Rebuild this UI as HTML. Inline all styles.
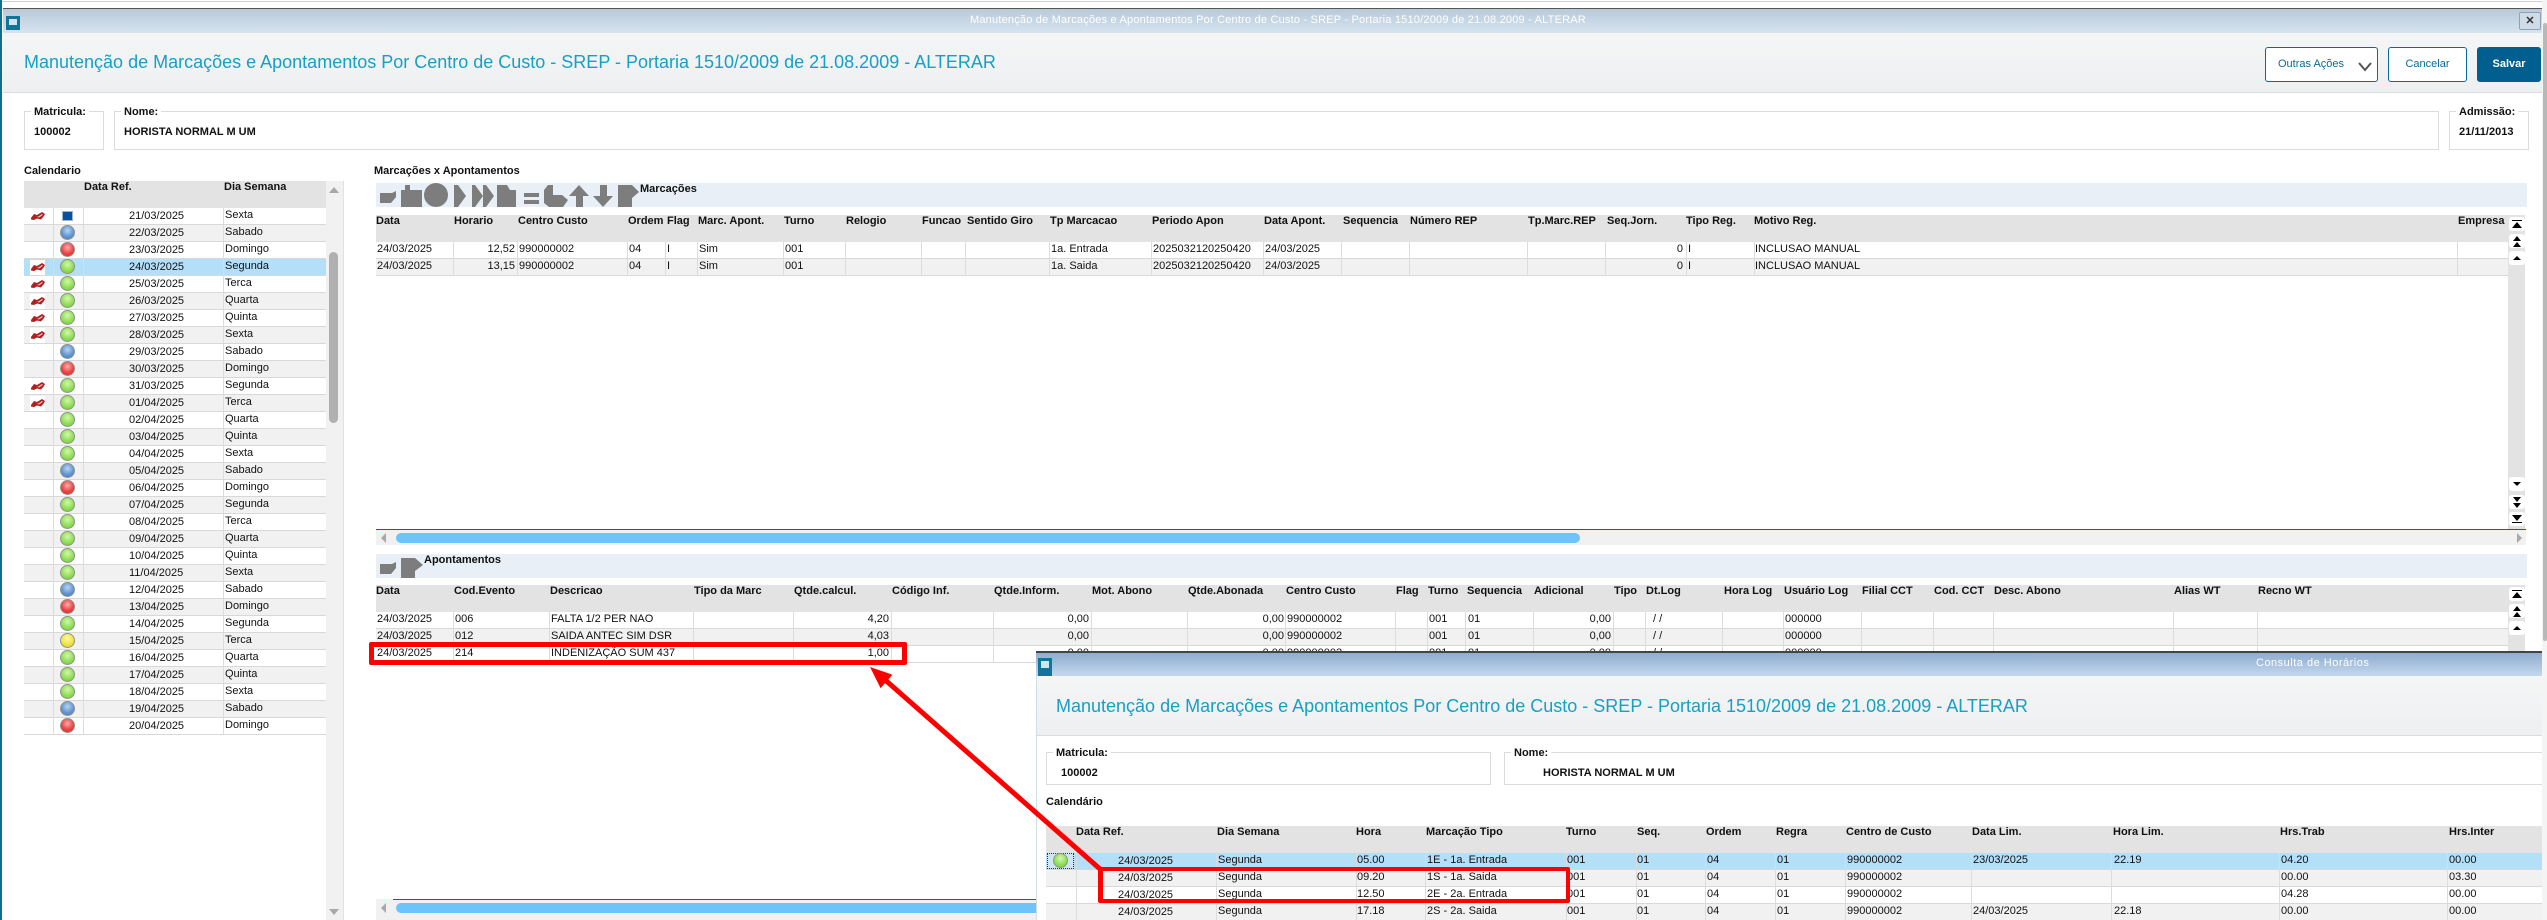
<!DOCTYPE html>
<html lang="pt"><head><meta charset="utf-8"><title>Manutenção de Marcações</title>
<style>
html,body{margin:0;padding:0;background:#fff}
body{position:relative;width:2547px;height:920px;overflow:hidden;font:11px/16px "Liberation Sans",Arial,sans-serif;color:#111}
div,span,svg,i,b{position:absolute;white-space:nowrap}
i{display:block}
.l{left:0;width:0;height:0}
.l span{top:0}
.l b{top:0;font-weight:bold}
.ra{transform:translateX(-100%)}
.bg{height:16px;border-bottom:1px solid #d8d8d8;background:#fff}
.bg.s{background:#f1f1f1}
.bg.sel{background:#b3dff9}
.hd{background:#e3e3e3;height:27px}
.v{width:1px;background:#dcdcdc}
.tb{background:#e8eff6}
.fs{border:1px solid #dcdcdc;box-sizing:border-box;background:#fff}
.lg{background:#fff;font-weight:bold;padding:0 3px;top:-8px}
.val{font-weight:bold}
.ttl{font-size:18px;line-height:22px;color:#17a0c4}
.cal{left:24px;top:208px;width:302px}
.r{left:0;width:302px;height:16px;border-bottom:1px solid #d8d8d8;background:#fff}
.r:nth-child(even){background:#f1f1f1}
.r.sel{background:#b3dff9}
.r u{position:absolute;left:105px;width:0;top:0;text-decoration:none}
.r em{position:absolute;left:201px;top:-1px;font-style:normal}
.g,.bl,.rd,.ye{width:15px;height:15px;border-radius:50%;left:36px;top:0;box-sizing:border-box;border:1px solid #8f948b}
.g{background:radial-gradient(circle at 50% 35%,#d4f7ae,#92e058 55%,#6fc43f)}
.bl{background:radial-gradient(circle at 50% 35%,#b9d4f0,#6498d4 55%,#4078b8)}
.rd{background:radial-gradient(circle at 50% 35%,#f9aeae,#ee4444 55%,#cc2a2a)}
.ye{background:radial-gradient(circle at 50% 35%,#fdf8a8,#f2e444 55%,#d2c432)}
.bk{left:7px;top:4px;width:14px;height:8px}
.w{left:6px;top:1px;width:15px;height:15px;background:#fff}
.sb{width:16px;height:14px;background:#fff;border-radius:3px;left:2509px}
.sb svg{left:0;top:0}
.btn{box-sizing:border-box;border:1px solid #0a6a96;border-radius:3px;top:47px;height:35px;background:#fff;color:#0a6a96;text-align:center;line-height:33px}
</style></head><body>
<svg width="0" height="0" style="left:0;top:0"><defs>
<g id="b"><path d="M0 6 L3 2 L6 3 L11 0 L14 2 L13 4 L10 7.5 L6 6.5 L3 8 L0 7.5 Z" fill="#b02020"/><path d="M5 4 L7 4.6 L11 2 L12 2.8 L8 5.6 Z" fill="#e6bcbc"/></g>
<g id="u1"><path d="M3 11 H13 L8 5 Z M3 4 H13 V3 H3 Z" fill="#000"/></g>
<g id="u2"><path d="M4 7 H12 L8 2 Z M4 13 H12 L8 8 Z" fill="#000"/></g>
<g id="u3"><path d="M4 9 H12 L8 5 Z" fill="#000"/></g>
<g id="d1"><path d="M3 3 H13 L8 9 Z M3 10 H13 V11 H3 Z" fill="#000"/></g>
<g id="d2"><path d="M4 2 H12 L8 7 Z M4 8 H12 L8 13 Z" fill="#000"/></g>
<g id="d3"><path d="M4 5 H12 L8 9 Z" fill="#000"/></g>
</defs></svg>

<!-- chrome -->
<div style="left:0;top:1px;width:2547px;height:1px;background:#cfcfcf"></div>
<div style="left:0;top:0;width:2px;height:920px;background:#0f6f8f"></div>
<div style="left:3px;top:8px;width:2539px;height:1px;background:#555"></div>
<div style="left:3px;top:9px;width:2539px;height:24px;background:linear-gradient(#b9c9d8,#d6e4f1)"></div>
<div style="left:970px;top:12px;color:#fff;letter-spacing:.2px">Manutenção de Marcações e Apontamentos Por Centro de Custo - SREP - Portaria 1510/2009 de 21.08.2009 - ALTERAR</div>
<div style="left:6px;top:16px;width:14px;height:14px;background:#11759a"><div style="left:3px;top:3px;width:8px;height:6px;background:#cfe6f2"></div></div>
<div style="left:2519px;top:12px;width:22px;height:18px;border:1px solid #8ea2b6;box-sizing:border-box;border-radius:2px;background:#cfdbe7;text-align:center;line-height:16px;font-weight:bold;color:#333">✕</div>
<div style="left:3px;top:33px;width:2539px;height:59px;background:linear-gradient(#f4f6f6,#edeff1);border-bottom:1px solid #dcdcdc"></div>
<div class="ttl" style="left:24px;top:51px">Manutenção de Marcações e Apontamentos Por Centro de Custo - SREP - Portaria 1510/2009 de 21.08.2009 - ALTERAR</div>
<div class="btn" style="left:2265px;width:113px;text-align:left;padding-left:12px">Outras Ações<svg width="16" height="10" style="left:91px;top:14px"><path d="M2 1 L8 8 L14 1" fill="none" stroke="#555" stroke-width="2"/></svg></div>
<div class="btn" style="left:2388px;width:79px">Cancelar</div>
<div class="btn" style="left:2477px;width:64px;background:#005f8f;color:#fff;border-color:#005f8f;font-weight:bold">Salvar</div>
<div style="left:2542px;top:0;width:5px;height:920px;background:#f4f4f4"></div>
<div style="left:2543px;top:23px;width:4px;height:618px;background:#b8b8b8;border-radius:2px"></div>

<!-- fields -->
<div class="fs" style="left:24px;top:111px;width:80px;height:39px"><b class="lg" style="left:6px">Matricula:</b><span class="val" style="left:9px;top:12px">100002</span></div>
<div class="fs" style="left:114px;top:111px;width:2325px;height:39px"><b class="lg" style="left:6px">Nome:</b><span class="val" style="left:9px;top:12px">HORISTA NORMAL M UM</span></div>
<div class="fs" style="left:2449px;top:111px;width:80px;height:39px"><b class="lg" style="left:6px">Admissão:</b><span class="val" style="left:9px;top:12px">21/11/2013</span></div>

<!-- calendario -->
<b style="left:24px;top:163px;font-weight:bold">Calendario</b>
<div class="hd" style="left:24px;top:181px;width:302px"></div>
<b style="left:84px;top:179px">Data Ref.</b><b style="left:224px;top:179px">Dia Semana</b>
<div style="left:326px;top:181px;width:17px;height:739px;background:#f1f1f1;border-right:1px solid #e2e2e2"></div>
<div style="left:329px;top:252px;width:9px;height:171px;background:#b0b0b0;border-radius:5px"></div>
<svg width="12" height="8" style="left:328px;top:186px"><path d="M1 7 H11 L6 1 Z" fill="#a8a8a8"/></svg>
<svg width="12" height="8" style="left:328px;top:908px"><path d="M1 1 H11 L6 7 Z" fill="#a8a8a8"/></svg>
<div class="cal" style="height:527px">
<div class="r" style="top:0"><svg class="bk"><use href="#b"/></svg><div style="left:38px;top:3px;width:11px;height:10px;background:#0b4f9e;border:1px solid #9db5c9;box-sizing:border-box"></div><u>21/03/2025</u><em>Sexta</em></div>
<div class="r" style="top:17px"><i class="bl"></i><u>22/03/2025</u><em>Sabado</em></div>
<div class="r" style="top:34px"><i class="rd"></i><u>23/03/2025</u><em>Domingo</em></div>
<div class="r sel" style="top:51px"><i class="w"></i><svg class="bk"><use href="#b"/></svg><i class="g"></i><u>24/03/2025</u><em>Segunda</em></div>
<div class="r" style="top:68px"><svg class="bk"><use href="#b"/></svg><i class="g"></i><u>25/03/2025</u><em>Terca</em></div>
<div class="r" style="top:85px"><i class="w"></i><svg class="bk"><use href="#b"/></svg><i class="g"></i><u>26/03/2025</u><em>Quarta</em></div>
<div class="r" style="top:102px"><svg class="bk"><use href="#b"/></svg><i class="g"></i><u>27/03/2025</u><em>Quinta</em></div>
<div class="r" style="top:119px"><i class="w"></i><svg class="bk"><use href="#b"/></svg><i class="g"></i><u>28/03/2025</u><em>Sexta</em></div>
<div class="r" style="top:136px"><i class="bl"></i><u>29/03/2025</u><em>Sabado</em></div>
<div class="r" style="top:153px"><i class="rd"></i><u>30/03/2025</u><em>Domingo</em></div>
<div class="r" style="top:170px"><svg class="bk"><use href="#b"/></svg><i class="g"></i><u>31/03/2025</u><em>Segunda</em></div>
<div class="r" style="top:187px"><i class="w"></i><svg class="bk"><use href="#b"/></svg><i class="g"></i><u>01/04/2025</u><em>Terca</em></div>
<div class="r" style="top:204px"><i class="g"></i><u>02/04/2025</u><em>Quarta</em></div>
<div class="r" style="top:221px"><i class="g"></i><u>03/04/2025</u><em>Quinta</em></div>
<div class="r" style="top:238px"><i class="g"></i><u>04/04/2025</u><em>Sexta</em></div>
<div class="r" style="top:255px"><i class="bl"></i><u>05/04/2025</u><em>Sabado</em></div>
<div class="r" style="top:272px"><i class="rd"></i><u>06/04/2025</u><em>Domingo</em></div>
<div class="r" style="top:289px"><i class="g"></i><u>07/04/2025</u><em>Segunda</em></div>
<div class="r" style="top:306px"><i class="g"></i><u>08/04/2025</u><em>Terca</em></div>
<div class="r" style="top:323px"><i class="g"></i><u>09/04/2025</u><em>Quarta</em></div>
<div class="r" style="top:340px"><i class="g"></i><u>10/04/2025</u><em>Quinta</em></div>
<div class="r" style="top:357px"><i class="g"></i><u>11/04/2025</u><em>Sexta</em></div>
<div class="r" style="top:374px"><i class="bl"></i><u>12/04/2025</u><em>Sabado</em></div>
<div class="r" style="top:391px"><i class="rd"></i><u>13/04/2025</u><em>Domingo</em></div>
<div class="r" style="top:408px"><i class="g"></i><u>14/04/2025</u><em>Segunda</em></div>
<div class="r" style="top:425px"><i class="ye"></i><u>15/04/2025</u><em>Terca</em></div>
<div class="r" style="top:442px"><i class="g"></i><u>16/04/2025</u><em>Quarta</em></div>
<div class="r" style="top:459px"><i class="g"></i><u>17/04/2025</u><em>Quinta</em></div>
<div class="r" style="top:476px"><i class="g"></i><u>18/04/2025</u><em>Sexta</em></div>
<div class="r" style="top:493px"><i class="bl"></i><u>19/04/2025</u><em>Sabado</em></div>
<div class="r" style="top:510px"><i class="rd"></i><u>20/04/2025</u><em>Domingo</em></div>
<div class="v" style="left:29px;top:0;height:527px"></div>
<div class="v" style="left:59px;top:0;height:527px"></div>
<div class="v" style="left:199px;top:0;height:527px"></div>
</div>

<!-- marcações -->
<b style="left:374px;top:163px">Marcações x Apontamentos</b>
<div class="tb" style="left:376px;top:183px;width:2151px;height:24px"></div>
<b style="left:640px;top:181px">Marcações</b>
<div class="hd" style="left:376px;top:215px;width:2149px"></div>
<div class="l" style="top:213px">
<b style="left:376px">Data</b><b style="left:454px">Horario</b><b style="left:518px">Centro Custo</b><b style="left:628px">Ordem</b><b style="left:667px">Flag</b><b style="left:698px">Marc. Apont.</b><b style="left:784px">Turno</b><b style="left:846px">Relogio</b><b style="left:922px">Funcao</b><b style="left:967px">Sentido Giro</b><b style="left:1050px">Tp Marcacao</b><b style="left:1152px">Periodo Apon</b><b style="left:1264px">Data Apont.</b><b style="left:1343px">Sequencia</b><b style="left:1410px">Número REP</b><b style="left:1528px">Tp.Marc.REP</b><b style="left:1607px">Seq.Jorn.</b><b style="left:1686px">Tipo Reg.</b><b style="left:1754px">Motivo Reg.</b><b style="left:2458px">Empresa</b>
</div>
<div class="bg" style="left:376px;top:242px;width:2132px"></div>
<div class="bg s" style="left:376px;top:259px;width:2132px"></div>
<div class="v" style="left:453px;top:242px;height:34px"></div><div class="v" style="left:517px;top:242px;height:34px"></div><div class="v" style="left:627px;top:242px;height:34px"></div><div class="v" style="left:665px;top:242px;height:34px"></div><div class="v" style="left:697px;top:242px;height:34px"></div><div class="v" style="left:783px;top:242px;height:34px"></div><div class="v" style="left:845px;top:242px;height:34px"></div><div class="v" style="left:921px;top:242px;height:34px"></div><div class="v" style="left:965px;top:242px;height:34px"></div><div class="v" style="left:1049px;top:242px;height:34px"></div><div class="v" style="left:1151px;top:242px;height:34px"></div><div class="v" style="left:1263px;top:242px;height:34px"></div><div class="v" style="left:1341px;top:242px;height:34px"></div><div class="v" style="left:1409px;top:242px;height:34px"></div><div class="v" style="left:1527px;top:242px;height:34px"></div><div class="v" style="left:1605px;top:242px;height:34px"></div><div class="v" style="left:1686px;top:242px;height:34px"></div><div class="v" style="left:1754px;top:242px;height:34px"></div><div class="v" style="left:2457px;top:242px;height:34px"></div>
<div class="l" style="top:241px">
<span style="left:377px">24/03/2025</span><span class="ra" style="left:515px">12,52</span><span style="left:519px">990000002</span><span style="left:629px">04</span><span style="left:667px">I</span><span style="left:699px">Sim</span><span style="left:785px">001</span><span style="left:1051px">1a. Entrada</span><span style="left:1153px">2025032120250420</span><span style="left:1265px">24/03/2025</span><span class="ra" style="left:1683px">0</span><span style="left:1688px">I</span><span style="left:1755px">INCLUSAO MANUAL</span>
</div>
<div class="l" style="top:258px">
<span style="left:377px">24/03/2025</span><span class="ra" style="left:515px">13,15</span><span style="left:519px">990000002</span><span style="left:629px">04</span><span style="left:667px">I</span><span style="left:699px">Sim</span><span style="left:785px">001</span><span style="left:1051px">1a. Saida</span><span style="left:1153px">2025032120250420</span><span style="left:1265px">24/03/2025</span><span class="ra" style="left:1683px">0</span><span style="left:1688px">I</span><span style="left:1755px">INCLUSAO MANUAL</span>
</div>
<!-- v scroll 1 -->
<div style="left:2508px;top:215px;width:17px;height:314px;background:#e3e3e3"></div>
<div class="sb" style="top:217px"><svg width="16" height="14"><use href="#u1"/></svg></div>
<div class="sb" style="top:234px"><svg width="16" height="14"><use href="#u2"/></svg></div>
<div class="sb" style="top:251px"><svg width="16" height="14"><use href="#u3"/></svg></div>
<div class="sb" style="top:477px"><svg width="16" height="14"><use href="#d3"/></svg></div>
<div class="sb" style="top:495px"><svg width="16" height="14"><use href="#d2"/></svg></div>
<div class="sb" style="top:512px"><svg width="16" height="14"><use href="#d1"/></svg></div>
<!-- h scroll 1 -->
<div style="left:376px;top:529px;width:2150px;height:1px;background:#1b5f86"></div>
<div style="left:376px;top:530px;width:2150px;height:15px;background:#f1f1f1"></div>
<div style="left:396px;top:533px;width:1184px;height:10px;background:#6cc4fb;border-radius:5px"></div>
<svg width="8" height="12" style="left:380px;top:532px"><path d="M6 1 V11 L1 6 Z" fill="#a8a8a8"/></svg>
<svg width="8" height="12" style="left:2515px;top:532px"><path d="M2 1 V11 L7 6 Z" fill="#a8a8a8"/></svg>

<!-- apontamentos -->
<div class="tb" style="left:376px;top:554px;width:2151px;height:24px"></div>
<b style="left:424px;top:552px">Apontamentos</b>
<div class="hd" style="left:376px;top:585px;width:2149px"></div>
<div class="l" style="top:583px">
<b style="left:376px">Data</b><b style="left:454px">Cod.Evento</b><b style="left:550px">Descricao</b><b style="left:694px">Tipo da Marc</b><b style="left:794px">Qtde.calcul.</b><b style="left:892px">Código Inf.</b><b style="left:994px">Qtde.Inform.</b><b style="left:1092px">Mot. Abono</b><b style="left:1188px">Qtde.Abonada</b><b style="left:1286px">Centro Custo</b><b style="left:1396px">Flag</b><b style="left:1428px">Turno</b><b style="left:1467px">Sequencia</b><b style="left:1534px">Adicional</b><b style="left:1614px">Tipo</b><b style="left:1646px">Dt.Log</b><b style="left:1724px">Hora Log</b><b style="left:1784px">Usuário Log</b><b style="left:1862px">Filial CCT</b><b style="left:1934px">Cod. CCT</b><b style="left:1994px">Desc. Abono</b><b style="left:2174px">Alias WT</b><b style="left:2258px">Recno WT</b>
</div>
<div class="bg" style="left:376px;top:612px;width:2132px"></div>
<div class="bg s" style="left:376px;top:629px;width:2132px"></div>
<div class="bg" style="left:376px;top:646px;width:2132px"></div>
<div class="v" style="left:453px;top:612px;height:51px"></div><div class="v" style="left:549px;top:612px;height:51px"></div><div class="v" style="left:693px;top:612px;height:51px"></div><div class="v" style="left:793px;top:612px;height:51px"></div><div class="v" style="left:891px;top:612px;height:51px"></div><div class="v" style="left:993px;top:612px;height:51px"></div><div class="v" style="left:1091px;top:612px;height:51px"></div><div class="v" style="left:1187px;top:612px;height:51px"></div><div class="v" style="left:1285px;top:612px;height:51px"></div><div class="v" style="left:1395px;top:612px;height:51px"></div><div class="v" style="left:1427px;top:612px;height:51px"></div><div class="v" style="left:1465px;top:612px;height:51px"></div><div class="v" style="left:1533px;top:612px;height:51px"></div><div class="v" style="left:1613px;top:612px;height:51px"></div><div class="v" style="left:1645px;top:612px;height:51px"></div><div class="v" style="left:1722px;top:612px;height:51px"></div><div class="v" style="left:1783px;top:612px;height:51px"></div><div class="v" style="left:1861px;top:612px;height:51px"></div><div class="v" style="left:1933px;top:612px;height:51px"></div><div class="v" style="left:1993px;top:612px;height:51px"></div><div class="v" style="left:2173px;top:612px;height:51px"></div><div class="v" style="left:2257px;top:612px;height:51px"></div>
<div class="l" style="top:611px">
<span style="left:377px">24/03/2025</span><span style="left:455px">006</span><span style="left:551px">FALTA 1/2 PER NAO</span><span class="ra" style="left:889px">4,20</span><span class="ra" style="left:1089px">0,00</span><span class="ra" style="left:1284px">0,00</span><span style="left:1287px">990000002</span><span style="left:1429px">001</span><span style="left:1468px">01</span><span class="ra" style="left:1611px">0,00</span><span style="left:1653px">/ /</span><span style="left:1785px">000000</span>
</div>
<div class="l" style="top:628px">
<span style="left:377px">24/03/2025</span><span style="left:455px">012</span><span style="left:551px">SAIDA ANTEC SIM DSR</span><span class="ra" style="left:889px">4,03</span><span class="ra" style="left:1089px">0,00</span><span class="ra" style="left:1284px">0,00</span><span style="left:1287px">990000002</span><span style="left:1429px">001</span><span style="left:1468px">01</span><span class="ra" style="left:1611px">0,00</span><span style="left:1653px">/ /</span><span style="left:1785px">000000</span>
</div>
<div class="l" style="top:645px">
<span style="left:377px">24/03/2025</span><span style="left:455px">214</span><span style="left:551px">INDENIZAÇÃO SUM 437</span><span class="ra" style="left:889px">1,00</span><span class="ra" style="left:1089px">0,00</span><span class="ra" style="left:1284px">0,00</span><span style="left:1287px">990000002</span><span style="left:1429px">001</span><span style="left:1468px">01</span><span class="ra" style="left:1611px">0,00</span><span style="left:1653px">/ /</span><span style="left:1785px">000000</span>
</div>
<div style="left:2508px;top:585px;width:17px;height:70px;background:#e3e3e3"></div>
<div class="sb" style="top:587px"><svg width="16" height="14"><use href="#u1"/></svg></div>
<div class="sb" style="top:604px"><svg width="16" height="14"><use href="#u2"/></svg></div>
<div class="sb" style="top:621px"><svg width="16" height="14"><use href="#u3"/></svg></div>
<!-- h scroll 2 -->
<div style="left:376px;top:899px;width:660px;height:21px;background:#f1f1f1"></div>
<div style="left:393px;top:899px;width:643px;height:1px;background:#1b5f86"></div>
<div style="left:396px;top:903px;width:640px;height:10px;background:#6cc4fb;border-radius:5px 0 0 5px"></div>
<svg width="8" height="12" style="left:380px;top:902px"><path d="M6 1 V11 L1 6 Z" fill="#a8a8a8"/></svg>

<!-- toolbar icons -->
<svg width="2547" height="920" style="left:0;top:0" fill="#7d7d7d">
<path d="M380 193 H392 L396 191 L396 197 L391 203 H380 Z"/>
<path d="M401 190 H405 V185 H410 V190 H422 V207 H401 Z"/>
<circle cx="436" cy="195" r="12"/>
<path d="M454 185 H458 L466 196 L458 207 H454 Z"/>
<path d="M472 185 H475 L483 196 V185 H486 L494 196 L486 207 H483 V196 L475 207 H472 Z"/>
<path d="M497 185 H507 L510 190 H516 V207 H497 Z"/>
<path d="M524 193 H539 V197 H524 Z M524 200 H539 V204 H524 Z"/>
<path d="M548 185 H553 V195 H562 L568 200 L563 207 H549 L544 203 V190 Z"/>
<path d="M579 185 L589 196 H583 V207 L576 207 V196 H569 Z"/>
<path d="M600 185 H607 V196 H613 L603 207 L593 196 H600 Z"/>
<path d="M618 185 H632 L639 192 L632 198 V207 H618 Z"/>
<path d="M380 564 H392 L396 562 L396 568 L391 574 H380 Z"/>
<path d="M401 558 H415 L423 565 L415 571 V578 H401 Z"/>
</svg>

<!-- popup -->
<div style="left:1036px;top:651px;width:1506px;height:269px;background:#fff;overflow:hidden">
<div style="left:0;top:0;width:1506px;height:2px;background:#444"></div>
<div style="left:0;top:2px;width:1506px;height:23px;background:linear-gradient(#8fadce,#c3d8ee)"></div>
<div style="left:2px;top:7px;width:14px;height:18px;background:#11759a"><div style="left:3px;top:3px;width:8px;height:7px;background:#cfe6f2"></div></div>
<div style="left:1220px;top:4px;color:#fff;letter-spacing:.5px">Consulta de Horários</div>
<div style="left:0;top:25px;width:1506px;height:59px;background:linear-gradient(#f4f6f6,#edeff1);border-bottom:1px solid #dcdcdc"></div>
<div class="ttl" style="left:20px;top:44px">Manutenção de Marcações e Apontamentos Por Centro de Custo - SREP - Portaria 1510/2009 de 21.08.2009 - ALTERAR</div>
<div class="fs" style="left:10px;top:101px;width:445px;height:33px"><b class="lg" style="left:6px">Matricula:</b><span class="val" style="left:14px;top:12px">100002</span></div>
<div class="fs" style="left:468px;top:101px;width:1060px;height:33px"><b class="lg" style="left:6px">Nome:</b><span class="val" style="left:38px;top:12px">HORISTA NORMAL M UM</span></div>
<b style="left:10px;top:143px">Calendário</b>
<div class="hd" style="left:10px;top:175px;width:1496px"></div>
<div class="l" style="top:173px">
<b style="left:40px">Data Ref.</b><b style="left:181px">Dia Semana</b><b style="left:320px">Hora</b><b style="left:390px">Marcação Tipo</b><b style="left:530px">Turno</b><b style="left:601px">Seq.</b><b style="left:670px">Ordem</b><b style="left:740px">Regra</b><b style="left:810px">Centro de Custo</b><b style="left:936px">Data Lim.</b><b style="left:1077px">Hora Lim.</b><b style="left:1244px">Hrs.Trab</b><b style="left:1413px">Hrs.Inter</b>
</div>
<div class="bg sel" style="left:10px;top:202px;width:1496px"></div>
<div class="bg s" style="left:10px;top:219px;width:1496px"></div>
<div class="bg" style="left:10px;top:236px;width:1496px"></div>
<div class="bg s" style="left:10px;top:253px;width:1496px"></div>
<div class="v" style="left:40px;top:202px;height:68px"></div><div class="v" style="left:180px;top:202px;height:68px"></div><div class="v" style="left:320px;top:202px;height:68px"></div><div class="v" style="left:389px;top:202px;height:68px"></div><div class="v" style="left:530px;top:202px;height:68px"></div><div class="v" style="left:600px;top:202px;height:68px"></div><div class="v" style="left:669px;top:202px;height:68px"></div><div class="v" style="left:739px;top:202px;height:68px"></div><div class="v" style="left:809px;top:202px;height:68px"></div><div class="v" style="left:935px;top:202px;height:68px"></div><div class="v" style="left:1075px;top:202px;height:68px"></div><div class="v" style="left:1243px;top:202px;height:68px"></div><div class="v" style="left:1411px;top:202px;height:68px"></div>
<div style="left:11px;top:202px;width:27px;height:16px;border:1px dotted #333;box-sizing:border-box;background:#cfe6f2"></div>
<i class="g" style="left:17px;top:202px"></i>
<div class="l" style="top:201px"><span style="left:82px;top:1px">24/03/2025</span><span style="left:182px">Segunda</span><span style="left:321px">05.00</span><span style="left:391px">1E - 1a. Entrada</span><span style="left:531px">001</span><span style="left:601px">01</span><span style="left:671px">04</span><span style="left:741px">01</span><span style="left:811px">990000002</span><span style="left:937px">23/03/2025</span><span style="left:1078px">22.19</span><span style="left:1245px">04.20</span><span style="left:1413px">00.00</span></div>
<div class="l" style="top:218px"><span style="left:82px;top:1px">24/03/2025</span><span style="left:182px">Segunda</span><span style="left:321px">09.20</span><span style="left:391px">1S - 1a. Saida</span><span style="left:531px">001</span><span style="left:601px">01</span><span style="left:671px">04</span><span style="left:741px">01</span><span style="left:811px">990000002</span><span style="left:1245px">00.00</span><span style="left:1413px">03.30</span></div>
<div class="l" style="top:235px"><span style="left:82px;top:1px">24/03/2025</span><span style="left:182px">Segunda</span><span style="left:321px">12.50</span><span style="left:391px">2E - 2a. Entrada</span><span style="left:531px">001</span><span style="left:601px">01</span><span style="left:671px">04</span><span style="left:741px">01</span><span style="left:811px">990000002</span><span style="left:1245px">04.28</span><span style="left:1413px">00.00</span></div>
<div class="l" style="top:252px"><span style="left:82px;top:1px">24/03/2025</span><span style="left:182px">Segunda</span><span style="left:321px">17.18</span><span style="left:391px">2S - 2a. Saida</span><span style="left:531px">001</span><span style="left:601px">01</span><span style="left:671px">04</span><span style="left:741px">01</span><span style="left:811px">990000002</span><span style="left:937px">24/03/2025</span><span style="left:1078px">22.18</span><span style="left:1245px">00.00</span><span style="left:1413px">00.00</span></div>
<div style="left:0;top:25px;width:1px;height:244px;background:#cfe0ea"></div>
</div>

<!-- red annotations -->
<div style="left:369px;top:642px;width:538px;height:23px;border:5px solid #f00;box-sizing:border-box;border-radius:2px"></div>
<div style="left:1098px;top:867px;width:472px;height:36px;border:4px solid #f00;border-left-width:5px;box-sizing:border-box;border-radius:2px"></div>
<svg width="2547" height="920" style="left:0;top:0">
<path d="M1100 869 L883 678" stroke="#f00" stroke-width="5" fill="none"/>
<path d="M870 667 L880.6 688.3 L892.4 674.7 Z" fill="#f00"/>
</svg>
</body></html>
